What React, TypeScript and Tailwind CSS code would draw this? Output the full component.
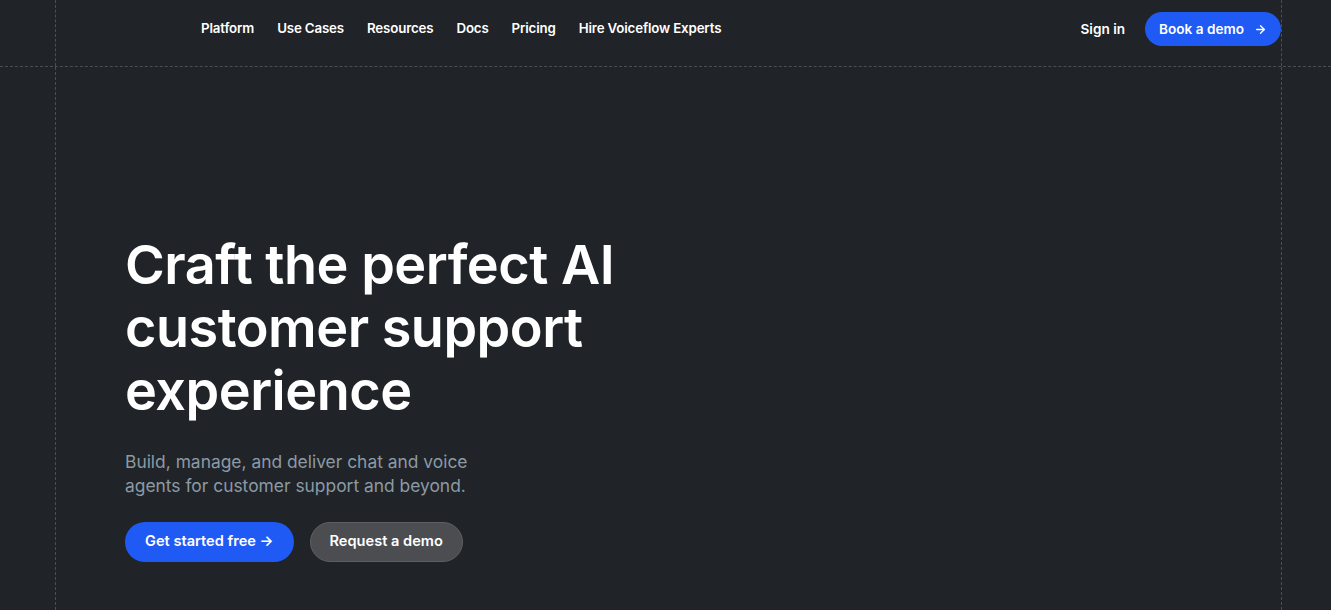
import { ArrowRight } from "lucide-react";

const navLinks = ["Platform", "Use Cases", "Resources", "Docs", "Pricing", "Hire Voiceflow Experts"];

export default function App() {
  return (
    <div className="min-h-screen bg-[#202328] text-white font-['Inter',sans-serif] flex flex-col">
      {/* Header row */}
      <header className="flex h-[67px] border-b border-dashed border-[#4b4f55]">
        <div className="w-[56px] shrink-0 border-r border-dashed border-[#4b4f55]" />
        <div className="flex-1 flex items-start justify-between pl-[145px] pt-[12px]">
          <nav className="flex items-center h-[34px] gap-[23px]">
            {navLinks.map((link) => (
              <a key={link} href="#" className="text-[13.3px] font-semibold tracking-[-0.15px] text-white">
                {link}
              </a>
            ))}
          </nav>
          <div className="flex items-center gap-[20px]">
            <a href="#" className="text-[13.6px] font-semibold text-white">
              Sign in
            </a>
            <a
              href="#"
              className="flex items-center gap-[10px] h-[34px] pl-[14px] pr-[14px] rounded-full bg-[#1f5af5] text-[13.6px] font-semibold text-white"
            >
              Book a demo
              <ArrowRight size={13} strokeWidth={2.5} />
            </a>
          </div>
        </div>
        <div className="w-[50px] shrink-0 border-l border-dashed border-[#4b4f55]" />
      </header>

      {/* Hero row */}
      <main className="flex flex-1">
        <div className="w-[56px] shrink-0 border-r border-dashed border-[#4b4f55]" />
        <section className="flex-1 pl-[69px] pt-[166px] pb-[40px]">
          <h1 className="text-[54px] leading-[63px] font-semibold tracking-[-0.5px] text-white">
            Craft the perfect AI
            <br />
            customer support
            <br />
            experience
          </h1>
          <p className="mt-[28px] text-[17.4px] leading-[24px] text-[#8b9aa5]">
            Build, manage, and deliver chat and voice
            <br />
            agents for customer support and beyond.
          </p>
          <div className="mt-[24px] flex items-center gap-[16px]">
            <a
              href="#"
              className="flex items-center h-[40px] px-[20px] rounded-full bg-[#1f5af5] text-[14.6px] font-semibold text-white"
            >
              Get started free →
            </a>
            <a
              href="#"
              className="flex items-center h-[40px] px-[19px] rounded-full bg-[#4b4d51] border border-[#5c5f63] text-[14.6px] font-semibold text-white"
            >
              Request a demo
            </a>
          </div>
        </section>
        <div className="w-[50px] shrink-0 border-l border-dashed border-[#4b4f55]" />
      </main>
    </div>
  );
}
